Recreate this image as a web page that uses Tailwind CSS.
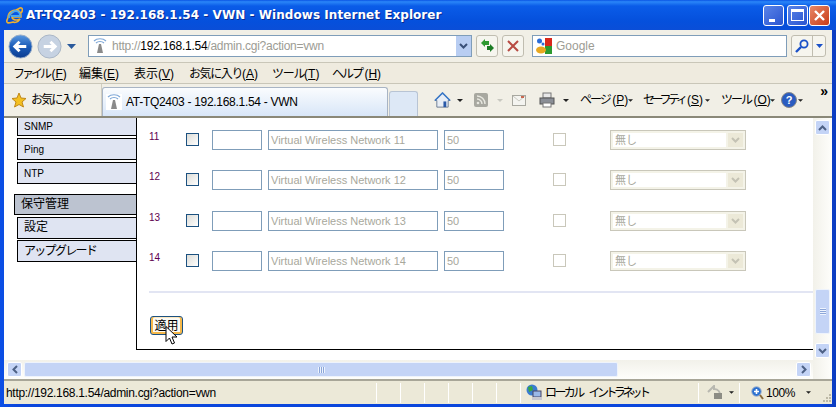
<!DOCTYPE html>
<html lang="ja">
<head>
  <meta charset="UTF-8">
  <title>AT-TQ2403 - 192.168.1.54 - VWN</title>
  <script src="https://cdn.jsdelivr.net/npm/@tailwindcss/browser@4"></script>
</head>
<body class="w-[836px] h-[407px] overflow-hidden bg-[#0a3ee0] font-['Liberation_Sans','Noto_Sans_CJK_JP',sans-serif] text-[11px] text-black">

  <div class="relative flex flex-col w-[836px] h-[407px] bg-[linear-gradient(to_right,#0b4fe6,#0a46dc_2%,#0a46dc_98%,#0b3cc0)]">

    <!-- title bar -->
    <div class="flex items-center h-[30px] shrink-0 pl-[6px] pr-[6px] bg-[linear-gradient(to_bottom,#0a54e4,#2a86f8_6%,#0a5ce8_20%,#0550dc_70%,#0a4ed8)]">
      <svg class="w-[17px] h-[17px] shrink-0" viewBox="0 0 17 17">
        <path d="M2 11 C2 5 7 3 10 3 C14 3 15 7 15 10 L6 10 C6 13 11 14 14 12 C12 15 9 16 7 15 C3 16 0 17 1 13 C2 9 7 4 14 1 C17 0 17 4 15 6" fill="none" stroke="#f0b030" stroke-width="1.6"/>
        <path d="M3 11 C3 6 7 4 10 4 C13 4 14 7 14 9 L5 9" fill="none" stroke="#4aa8f0" stroke-width="1.8"/>
      </svg>
      <span class="ml-[3px] font-['DejaVu_Sans'] font-bold text-[12px] tracking-[0.05px] text-white [text-shadow:1px_1px_0_#0a2a90]">AT-TQ2403 - 192.168.1.54 - VWN - Windows Internet Explorer</span>
      <div class="ml-auto flex">
        <div class="flex items-end w-[21px] h-[21px] rounded-[3px] border border-white bg-[linear-gradient(135deg,#5a84e8,#2a55d0)] pb-[3px] pl-[5px]"><div class="w-[6px] h-[3px] bg-white"></div></div>
        <div class="flex items-center justify-center ml-[3px] w-[21px] h-[21px] rounded-[3px] border border-white bg-[linear-gradient(135deg,#5a84e8,#2a55d0)]"><div class="w-[13px] h-[12px] border border-white border-t-[3px]"></div></div>
        <div class="flex items-center justify-center ml-[1px] w-[21px] h-[21px] rounded-[3px] border border-white bg-[linear-gradient(135deg,#e88868,#c83c18)]">
          <svg class="w-[13px] h-[13px]" viewBox="0 0 13 13"><path d="M2 2 L11 11 M11 2 L2 11" stroke="#fff" stroke-width="2.4"/></svg>
        </div>
      </div>
    </div>

    <!-- browser frame -->
    <div class="flex flex-col flex-1 mx-[4px] mb-[3px] min-h-0 bg-white">

      <!-- address row -->
      <div class="flex items-center h-[33px] shrink-0 pl-[4px] bg-[#f1efe6] border-b border-[#c9c6b8]">
        <svg class="w-[25px] h-[25px] shrink-0" viewBox="0 0 26 26"><defs><linearGradient id="back" x1="0" y1="0" x2="0" y2="1"><stop offset="0" stop-color="#5a98e0"/><stop offset=".5" stop-color="#1a5cb8"/><stop offset="1" stop-color="#0c3c90"/></linearGradient></defs><circle cx="13" cy="13" r="12" fill="url(#back)" stroke="#9aaec8"/><path d="M7 13 H19 M12 8 L7 13 L12 18" fill="none" stroke="#fff" stroke-width="3"/></svg>
        <svg class="w-[25px] h-[25px] shrink-0 ml-[4px]" viewBox="0 0 26 26"><circle cx="13" cy="13" r="12" fill="#c6d2e2" stroke="#a8b4c4"/><path d="M7 13 H19 M14 8 L19 13 L14 18" fill="none" stroke="#fff" stroke-width="3"/></svg>
        <svg class="w-[9px] h-[5px] ml-[5px] shrink-0" viewBox="0 0 9 5"><path d="M0 0 H9 L4.5 5 Z" fill="#2a5a9c"/></svg>
        <div class="flex items-center ml-[12px] w-[384px] h-[22px] pl-[3px] bg-white border border-[#7f9db9] tracking-[-0.25px] text-[12px]">
          <svg class="w-[16px] h-[16px] shrink-0" viewBox="0 0 16 16"><path d="M2 3 C5 0 11 0 14 3 M4 5 C6 3 10 3 12 5" fill="none" stroke="#7fa8d8" stroke-width="1.2"/><path d="M7 6 H9 L11 15 H5 Z" fill="#8a8a8a"/></svg>
          <span class="ml-[4px] text-[#9c9c94]">http://</span><span>192.168.1.54</span><span class="text-[#9c9c94]">/admin.cgi?action=vwn</span>
          <div class="ml-auto flex items-center justify-center w-[15px] h-[20px] bg-[#b8cdf2]">
            <svg class="w-[9px] h-[6px]" viewBox="0 0 9 6"><path d="M1 1 L4.5 4.5 L8 1" fill="none" stroke="#3a5078" stroke-width="2"/></svg>
          </div>
        </div>
        <div class="flex items-center justify-center ml-[4px] w-[22px] h-[22px] rounded-[3px] border border-[#c0bdb0] bg-[#f6f5ee]">
          <svg class="w-[15px] h-[14px]" viewBox="0 0 15 14"><path d="M1 4 L5 0 V2 H9 V6 H5 V8 Z" fill="#2e9a30"/><path d="M14 9 L10 5 V7 H7 L7 11 H10 V13 Z" fill="#1c7c24"/></svg>
        </div>
        <div class="flex items-center justify-center ml-[4px] w-[22px] h-[22px] rounded-[3px] border border-[#c0bdb0] bg-[#f6f5ee]">
          <svg class="w-[12px] h-[12px]" viewBox="0 0 12 12"><path d="M1 1 L11 11 M11 1 L1 11" stroke="#b84a42" stroke-width="2"/></svg>
        </div>
        <div class="flex items-center ml-[8px] w-[255px] h-[22px] pl-[3px] bg-white border border-[#7f9db9]">
          <svg class="w-[16px] h-[16px] shrink-0" viewBox="0 0 16 16"><rect width="16" height="16" fill="#fff"/><path d="M9 0 H16 V8 H9 Z" fill="#d8281c"/><path d="M9 8 H16 V16 H9 Z" fill="#2c9a30"/><circle cx="3.5" cy="3" r="2.5" fill="#2a6cd8"/><circle cx="7" cy="6" r="1.5" fill="#2a6cd8"/><ellipse cx="5" cy="12" rx="5" ry="3.5" fill="#e8a820"/></svg>
          <span class="ml-[4px] text-[12px] text-[#9c9c94]">Google</span>
        </div>
        <div class="flex items-center ml-[4px] w-[35px] h-[22px] rounded-[3px] border border-[#c0bdb0] bg-[#f6f5ee]">
          <div class="flex items-center justify-center w-[21px] h-full border-r border-[#c0bdb0]">
            <svg class="w-[14px] h-[14px]" viewBox="0 0 14 14"><circle cx="9" cy="5" r="3.6" fill="none" stroke="#1a50c8" stroke-width="1.8"/><path d="M6 8 L1 13" stroke="#1a50c8" stroke-width="2.4"/></svg>
          </div>
          <svg class="w-[7px] h-[4px] ml-[3px]" viewBox="0 0 7 4"><path d="M0 0 H7 L3.5 4 Z" fill="#1a50c8"/></svg>
        </div>
      </div>

      <!-- menu row -->
      <div class="flex items-center h-[21px] shrink-0 pl-[9px] pt-[1px] bg-[#efebdf] text-[12px] border-b border-[#c9c6b8] whitespace-nowrap">
        <span class="w-[66px]"><span class="tracking-[-3px]">ファイル</span>&thinsp;(<u>F</u>)</span>
        <span class="w-[55px]">編集(<u>E</u>)</span>
        <span class="w-[55px]">表示(<u>V</u>)</span>
        <span class="w-[83px]"><span class="tracking-[-1.4px]">お気に入り</span>(<u>A</u>)</span>
        <span class="w-[60px]"><span class="tracking-[-1.3px]">ツール</span>(<u>T</u>)</span>
        <span><span class="tracking-[-2px]">ヘルプ</span>&thinsp;(<u>H</u>)</span>
      </div>

      <!-- favourites and command row -->
      <div class="relative flex items-end h-[34px] shrink-0 bg-[#f1efe6] border-b-2 border-[#8a8878]">
        <div class="flex items-center self-center h-full pl-[7px] w-[98px] border-r border-[#d0cdc0] text-[12px]">
          <svg class="w-[16px] h-[16px] shrink-0" viewBox="0 0 16 16"><path d="M8 1 L10 6 L15 6.5 L11 10 L12.5 15 L8 12.5 L3.5 15 L5 10 L1 6.5 L6 6 Z" fill="#f4c020" stroke="#c08818"/></svg>
          <span class="ml-[4px] tracking-[-1.8px] whitespace-nowrap">お気に入り</span>
        </div>
        <div class="flex items-center w-[286px] h-[29px] pl-[3px] rounded-t-[3px] border border-b-0 border-[#a8b4c4] bg-[linear-gradient(to_bottom,#fafcfe,#d8e6f8)] text-[12px]">
          <svg class="w-[16px] h-[16px] shrink-0" viewBox="0 0 16 16"><rect width="16" height="16" fill="#fff"/><path d="M2 3 C5 0 11 0 14 3 M4 5 C6 3 10 3 12 5" fill="none" stroke="#7fa8d8" stroke-width="1.2"/><path d="M7 6 H9 L11 15 H5 Z" fill="#8a8a8a"/></svg>
          <span class="ml-[4px] tracking-[-0.3px]">AT-TQ2403 - 192.168.1.54 - VWN</span>
        </div>
        <div class="ml-[1px] w-[29px] h-[25px] rounded-t-[3px] border border-b-0 border-[#b8c4d4] bg-[#dde8f6]"></div>
        <div class="flex items-center self-center h-full ml-[16px] text-[12px]">
          <svg class="w-[17px] h-[17px] shrink-0" viewBox="0 0 18 18"><path d="M9 1 L17 9 H15 V16 H3 V9 H1 Z" fill="#e8eef6" stroke="#6a7a90"/><path d="M1 9 L9 1 L17 9" fill="none" stroke="#3a78c8" stroke-width="1.6"/><rect x="10" y="10" width="3" height="6" fill="#2a5aa8"/></svg>
          <svg class="w-[6px] h-[3px] ml-[6px]" viewBox="0 0 6 3"><path d="M0 0 H6 L3 3 Z" fill="#222"/></svg>
          <div class="flex items-center justify-center ml-[11px] w-[14px] h-[14px] rounded-[2px] bg-[#a8a8a0]"><svg class="w-[10px] h-[10px]" viewBox="0 0 10 10"><circle cx="2" cy="8" r="1.3" fill="#e8e8e0"/><path d="M1 4 A5 5 0 0 1 6 9 M1 1 A8 8 0 0 1 9 9" fill="none" stroke="#e8e8e0" stroke-width="1.4"/></svg></div>
          <svg class="w-[6px] h-[3px] ml-[9px]" viewBox="0 0 6 3"><path d="M0 0 H6 L3 3 Z" fill="#c8c8c0"/></svg>
          <svg class="w-[14px] h-[11px] ml-[9px]" viewBox="0 0 14 11"><rect x=".5" y=".5" width="13" height="10" fill="#f4f4f0" stroke="#a8a8a0"/><path d="M1 1 L7 6 L13 1" fill="none" stroke="#c8c8c0"/><rect x="9" y="1" width="3" height="2" fill="#c86850"/></svg>
          <svg class="w-[16px] h-[16px] ml-[13px]" viewBox="0 0 16 16"><rect x="4" y="1" width="8" height="5" fill="#e8e8e8" stroke="#777"/><rect x="1" y="6" width="14" height="6" fill="#8a8e96" stroke="#555"/><rect x="4" y="11" width="8" height="4" fill="#fff" stroke="#777"/></svg>
          <svg class="w-[6px] h-[3px] ml-[8px]" viewBox="0 0 6 3"><path d="M0 0 H6 L3 3 Z" fill="#222"/></svg>
          <span class="ml-[11px] w-[46px] whitespace-nowrap"><span class="tracking-[-2px]">ページ</span>&thinsp;(<u>P</u>)</span>
          <svg class="w-[5px] h-[3px] ml-[2px]" viewBox="0 0 6 3"><path d="M0 0 H6 L3 3 Z" fill="#222"/></svg>
          <span class="ml-[10px] w-[59px] whitespace-nowrap"><span class="tracking-[-3.4px]">セーフティ</span>&thinsp;(<u>S</u>)</span>
          <svg class="w-[5px] h-[3px] ml-[3px]" viewBox="0 0 6 3"><path d="M0 0 H6 L3 3 Z" fill="#222"/></svg>
          <span class="ml-[11px] w-[46px] whitespace-nowrap"><span class="tracking-[-2px]">ツール</span>&thinsp;(<u>O</u>)</span>
          <svg class="w-[5px] h-[3px] ml-[3px]" viewBox="0 0 6 3"><path d="M0 0 H6 L3 3 Z" fill="#222"/></svg>
          <div class="flex items-center justify-center ml-[6px] w-[16px] h-[16px] rounded-full bg-[#2a5cc0] border border-[#888] text-white font-bold text-[11px]">?</div>
          <svg class="w-[5px] h-[3px] ml-[1px]" viewBox="0 0 6 3"><path d="M0 0 H6 L3 3 Z" fill="#222"/></svg>
        </div>
        <span class="absolute right-[4px] top-[0px] text-[14px] font-bold leading-none">»</span>
      </div>

      <!-- page + vertical scrollbar -->
      <div class="flex flex-1 min-h-0">
        <div class="flex-1 flex flex-col min-w-0">
          <div class="flex flex-1 min-h-0 overflow-hidden bg-white">
            <!-- sidebar -->
            <div class="flex flex-col w-[133px] h-[232px] shrink-0 border-r border-black">
              <div class="flex items-start ml-[13px] h-[18px] pl-[6px] pt-[1px] bg-[#dfe4f2] border border-t-0 border-r-0 border-black text-[10px]">SNMP</div>
              <div class="flex items-center ml-[13px] mt-[2px] h-[22px] pl-[6px] bg-[#dfe4f2] border border-r-0 border-black text-[10px]">Ping</div>
              <div class="flex items-center ml-[13px] mt-[2px] h-[22px] pl-[6px] bg-[#dfe4f2] border border-r-0 border-black text-[10px]">NTP</div>
              <div class="flex items-center ml-[10px] mt-[10px] h-[21px] pl-[6px] pb-[2px] bg-[#bcc3d0] border border-r-0 border-black text-[12px]">保守管理</div>
              <div class="flex items-center ml-[13px] mt-[2px] h-[22px] pl-[6px] pb-[2px] bg-[#dfe4f2] border border-r-0 border-black text-[12px]">設定</div>
              <div class="flex items-center ml-[13px] mt-[1px] h-[22px] pl-[6px] bg-[#dfe4f2] border border-r-0 border-black text-[12px] tracking-[-1.7px]">アップグレード</div>
            </div>
            <!-- main column -->
            <div class="flex flex-col flex-1 h-[232px] border-b border-black">
              <div class="flex flex-col pt-[12px] pl-[12px]">
                <!-- row 11 -->
                <div class="flex items-center h-[20px] mb-[20px]">
                  <span class="w-[37px] -mt-[8px] text-[10px] text-[#600050]">11</span>
                  <div class="-mt-[2px] w-[13px] h-[13px] border border-[#1c5180] bg-[linear-gradient(135deg,#dcdcd7,#fff)]"></div>
                  <div class="ml-[13px] w-[50px] h-[20px] border border-[#7f9db9]"></div>
                  <div class="flex items-center ml-[6px] w-[170px] h-[20px] pl-[2px] border border-[#7f9db9] text-[11px] text-[#a8a89c]">Virtual Wireless Network 11</div>
                  <div class="flex items-center ml-[6px] w-[60px] h-[20px] pl-[2px] border border-[#7f9db9] text-[11px] text-[#a8a89c]">50</div>
                  <div class="-mt-[2px] ml-[49px] w-[13px] h-[13px] border border-[#c9c7ba]"></div>
                  <div class="flex items-center ml-[44px] w-[136px] h-[20px] p-[2px] border border-[#c9c7ba] bg-[#f4f3e8]">
                    <span class="flex-1 h-full pl-[2px] bg-white leading-[14px] text-[11px] text-[#a8a89c]">無し</span>
                    <div class="flex items-center justify-center w-[15px] h-full ml-[2px] bg-[#ece9d8]"><svg class="w-[9px] h-[6px]" viewBox="0 0 9 6"><path d="M1 1 L4.5 4.5 L8 1" fill="none" stroke="#c4c2b4" stroke-width="2"/></svg></div>
                  </div>
                </div>
                <!-- row 12 -->
                <div class="flex items-center h-[20px] mb-[21px]">
                  <span class="w-[37px] -mt-[8px] text-[10px] text-[#600050]">12</span>
                  <div class="-mt-[2px] w-[13px] h-[13px] border border-[#1c5180] bg-[linear-gradient(135deg,#dcdcd7,#fff)]"></div>
                  <div class="ml-[13px] w-[50px] h-[20px] border border-[#7f9db9]"></div>
                  <div class="flex items-center ml-[6px] w-[170px] h-[20px] pl-[2px] border border-[#7f9db9] text-[11px] text-[#a8a89c]">Virtual Wireless Network 12</div>
                  <div class="flex items-center ml-[6px] w-[60px] h-[20px] pl-[2px] border border-[#7f9db9] text-[11px] text-[#a8a89c]">50</div>
                  <div class="-mt-[2px] ml-[49px] w-[13px] h-[13px] border border-[#c9c7ba]"></div>
                  <div class="flex items-center ml-[44px] w-[136px] h-[20px] p-[2px] border border-[#c9c7ba] bg-[#f4f3e8]">
                    <span class="flex-1 h-full pl-[2px] bg-white leading-[14px] text-[11px] text-[#a8a89c]">無し</span>
                    <div class="flex items-center justify-center w-[15px] h-full ml-[2px] bg-[#ece9d8]"><svg class="w-[9px] h-[6px]" viewBox="0 0 9 6"><path d="M1 1 L4.5 4.5 L8 1" fill="none" stroke="#c4c2b4" stroke-width="2"/></svg></div>
                  </div>
                </div>
                <!-- row 13 -->
                <div class="flex items-center h-[20px] mb-[20px]">
                  <span class="w-[37px] -mt-[8px] text-[10px] text-[#600050]">13</span>
                  <div class="-mt-[2px] w-[13px] h-[13px] border border-[#1c5180] bg-[linear-gradient(135deg,#dcdcd7,#fff)]"></div>
                  <div class="ml-[13px] w-[50px] h-[20px] border border-[#7f9db9]"></div>
                  <div class="flex items-center ml-[6px] w-[170px] h-[20px] pl-[2px] border border-[#7f9db9] text-[11px] text-[#a8a89c]">Virtual Wireless Network 13</div>
                  <div class="flex items-center ml-[6px] w-[60px] h-[20px] pl-[2px] border border-[#7f9db9] text-[11px] text-[#a8a89c]">50</div>
                  <div class="-mt-[2px] ml-[49px] w-[13px] h-[13px] border border-[#c9c7ba]"></div>
                  <div class="flex items-center ml-[44px] w-[136px] h-[20px] p-[2px] border border-[#c9c7ba] bg-[#f4f3e8]">
                    <span class="flex-1 h-full pl-[2px] bg-white leading-[14px] text-[11px] text-[#a8a89c]">無し</span>
                    <div class="flex items-center justify-center w-[15px] h-full ml-[2px] bg-[#ece9d8]"><svg class="w-[9px] h-[6px]" viewBox="0 0 9 6"><path d="M1 1 L4.5 4.5 L8 1" fill="none" stroke="#c4c2b4" stroke-width="2"/></svg></div>
                  </div>
                </div>
                <!-- row 14 -->
                <div class="flex items-center h-[20px]">
                  <span class="w-[37px] -mt-[8px] text-[10px] text-[#600050]">14</span>
                  <div class="-mt-[2px] w-[13px] h-[13px] border border-[#1c5180] bg-[linear-gradient(135deg,#dcdcd7,#fff)]"></div>
                  <div class="ml-[13px] w-[50px] h-[20px] border border-[#7f9db9]"></div>
                  <div class="flex items-center ml-[6px] w-[170px] h-[20px] pl-[2px] border border-[#7f9db9] text-[11px] text-[#a8a89c]">Virtual Wireless Network 14</div>
                  <div class="flex items-center ml-[6px] w-[60px] h-[20px] pl-[2px] border border-[#7f9db9] text-[11px] text-[#a8a89c]">50</div>
                  <div class="-mt-[2px] ml-[49px] w-[13px] h-[13px] border border-[#c9c7ba]"></div>
                  <div class="flex items-center ml-[44px] w-[136px] h-[20px] p-[2px] border border-[#c9c7ba] bg-[#f4f3e8]">
                    <span class="flex-1 h-full pl-[2px] bg-white leading-[14px] text-[11px] text-[#a8a89c]">無し</span>
                    <div class="flex items-center justify-center w-[15px] h-full ml-[2px] bg-[#ece9d8]"><svg class="w-[9px] h-[6px]" viewBox="0 0 9 6"><path d="M1 1 L4.5 4.5 L8 1" fill="none" stroke="#c4c2b4" stroke-width="2"/></svg></div>
                  </div>
                </div>
              </div>
              <div class="ml-[12px] mt-[20px] h-[2px] bg-[#e2e5f3]"></div>
              <div class="relative ml-[13px] mt-[23px] flex items-center justify-center w-[33px] h-[19px] rounded-[3px] border border-[#1c5180] bg-[#fbfaf4] shadow-[inset_0_-2px_0_#f5b84a,inset_2px_0_0_#f5b84a,inset_-2px_0_0_#f5b84a,inset_0_1px_0_#fde8c0] text-[12px]">
                適用
                <svg class="absolute left-[14px] top-[8px] w-[13px] h-[21px]" viewBox="0 0 13 20"><path d="M1 1 V16 L4.5 12.5 L7 18.5 L9.5 17.5 L7 11.5 H12 Z" fill="#fff" stroke="#000"/></svg>
              </div>
            </div>
          </div>
          <!-- horizontal scrollbar -->
          <div class="flex items-center h-[19px] shrink-0 pl-[3px] pr-[2px] bg-[linear-gradient(to_bottom,#f2f1ea,#fefefb)]">
            <div class="flex items-center justify-center w-[15px] h-[15px] rounded-[2px] border border-white bg-[#c4d4f6]"><svg class="w-[6px] h-[9px]" viewBox="0 0 6 9"><path d="M5 1 L1.5 4.5 L5 8" fill="none" stroke="#4d6185" stroke-width="2"/></svg></div>
            <div class="flex items-center justify-center ml-[2px] w-[594px] h-[15px] rounded-[2px] border border-[#eef3fc] bg-[#c4d4f6]"><div class="w-[7px] h-[6px] bg-[repeating-linear-gradient(to_right,#eef4fe_0_1px,#8ca6d8_1px_2px)]"></div></div>
            <div class="ml-auto flex items-center justify-center w-[15px] h-[15px] rounded-[2px] border border-white bg-[#c4d4f6]"><svg class="w-[6px] h-[9px]" viewBox="0 0 6 9"><path d="M1 1 L4.5 4.5 L1 8" fill="none" stroke="#4d6185" stroke-width="2"/></svg></div>
          </div>
        </div>
        <!-- vertical scrollbar -->
        <div class="flex flex-col items-center w-[19px] shrink-0 pt-[2px] bg-[linear-gradient(to_right,#f2f1ea,#fefefb)]">
          <div class="flex items-center justify-center w-[15px] h-[15px] rounded-[2px] border border-white bg-[#c4d4f6]"><svg class="w-[9px] h-[6px]" viewBox="0 0 9 6"><path d="M1 5 L4.5 1.5 L8 5" fill="none" stroke="#4d6185" stroke-width="2"/></svg></div>
          <div class="flex items-center justify-center mt-[154px] w-[15px] h-[45px] rounded-[2px] border border-[#eef3fc] bg-[#c4d4f6]"><div class="w-[6px] h-[7px] bg-[repeating-linear-gradient(to_bottom,#eef4fe_0_1px,#8ca6d8_1px_2px)]"></div></div>
          <div class="mt-[9px] flex items-center justify-center w-[15px] h-[15px] rounded-[2px] border border-white bg-[#c4d4f6]"><svg class="w-[9px] h-[6px]" viewBox="0 0 9 6"><path d="M1 1 L4.5 4.5 L8 1" fill="none" stroke="#4d6185" stroke-width="2"/></svg></div>
        </div>
      </div>

      <!-- status bar -->
      <div class="relative flex items-center h-[25px] shrink-0 pl-[2px] bg-[#ece9d8] border-t-2 border-[#a8a698] text-[12px]">
        <span class="w-[370px] tracking-[-0.3px]">http://192.168.1.54/admin.cgi?action=vwn</span>
        <div class="w-[24px] h-[20px] border-l border-white"></div>
        <div class="w-[24px] h-[20px] border-l border-white"></div>
        <div class="w-[24px] h-[20px] border-l border-white"></div>
        <div class="w-[24px] h-[20px] border-l border-white"></div>
        <div class="w-[24px] h-[20px] border-l border-white"></div>
        <div class="w-[24px] h-[20px] border-l border-white"></div>
        <div class="flex items-center w-[178px] h-[20px] pl-[4px] border-l border-white">
          <svg class="w-[17px] h-[17px] shrink-0" viewBox="0 0 17 17"><circle cx="7" cy="6" r="5.5" fill="#3a7cd0"/><path d="M3 3 L7 2 L8 6 L4 8 Z" fill="#3aa840"/><rect x="8" y="7" width="8" height="6" fill="#9ab8e8" stroke="#446"/><rect x="7" y="13" width="10" height="3" fill="#c8c8d0"/></svg>
          <span class="ml-[3px] tracking-[-2.6px] whitespace-nowrap">ローカル</span>
          <span class="ml-[6px] tracking-[-3.6px] whitespace-nowrap">イントラネット</span>
        </div>
        <div class="flex items-center w-[41px] h-[20px] pl-[8px] border-l border-white">
          <svg class="w-[16px] h-[15px]" viewBox="0 0 16 15"><path d="M1 7 L7 1 V4 C12 4 13 8 13 10" fill="none" stroke="#b8b8b0" stroke-width="2"/><rect x="7" y="8" width="8" height="6" fill="#8c8c84"/></svg>
          <svg class="w-[5px] h-[3px] ml-[6px]" viewBox="0 0 6 3"><path d="M0 0 H6 L3 3 Z" fill="#222"/></svg>
        </div>
        <div class="flex items-center h-[20px] pl-[11px] border-l border-white">
          <svg class="w-[13px] h-[14px]" viewBox="0 0 13 14"><circle cx="5.5" cy="5.5" r="4.8" fill="#2a70d0" stroke="#aab8cc"/><path d="M3 5.5 H8 M5.5 3 V8" stroke="#fff" stroke-width="1.6"/><path d="M9 9 L12 13" stroke="#8a6a3a" stroke-width="2"/></svg>
          <span class="ml-[2px] tracking-[-0.4px]">100%</span>
          <svg class="w-[5px] h-[3px] ml-[11px]" viewBox="0 0 6 3"><path d="M0 0 H6 L3 3 Z" fill="#222"/></svg>
        </div>
        <svg class="absolute right-0 bottom-[1px] w-[10px] h-[10px]" viewBox="0 0 10 10"><path d="M7 1 h2 v2 h-2 Z M4 4 h2 v2 h-2 Z M7 4 h2 v2 h-2 Z M1 7 h2 v2 h-2 Z M4 7 h2 v2 h-2 Z M7 7 h2 v2 h-2 Z" fill="#bdb9a6"/></svg>
      </div>
    </div>
  </div>
</body>
</html>
